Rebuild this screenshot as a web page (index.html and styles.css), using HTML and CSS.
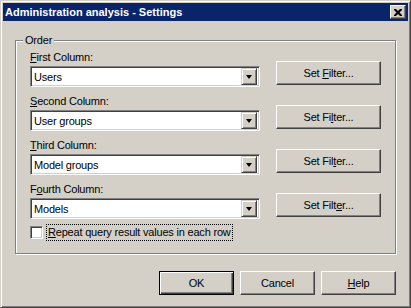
FILE: index.html
```html
<!DOCTYPE html>
<html lang="en">
  <head>
    <meta charset="UTF-8" />
    <title>Administration analysis - Settings</title>
    <link rel="stylesheet" href="styles.css">
  </head>
  <body>
    <div class="window">
      <!-- title bar -->
      <div class="titlebar">
        <span class="title">Administration analysis - Settings</span>
        <button class="close-btn" aria-label="Close">
          <svg width="8" height="7" viewBox="0 0 8 7">
            <path d="M0 0h2l2 2 2-2h2v1l-2.5 2.5 2.5 2.5v1h-2l-2-2-2 2h-2v-1l2.5-2.5-2.5-2.5z" fill="#000"/>
          </svg>
        </button>
      </div>

      <div class="body">
        <div class="group">
          <span class="group-title">Order</span>

          <div class="row">
            <div class="field">
              <label><u>F</u>irst Column:</label>
              <div class="combo">
                <span class="combo-value">Users</span>
                <span class="combo-arrow"><i></i></span>
              </div>
            </div>
            <button class="btn filter">Set <u>F</u>ilter...</button>
          </div>

          <div class="row">
            <div class="field">
              <label><u>S</u>econd Column:</label>
              <div class="combo">
                <span class="combo-value">User groups</span>
                <span class="combo-arrow"><i></i></span>
              </div>
            </div>
            <button class="btn filter">Set Fi<u>l</u>ter...</button>
          </div>

          <div class="row">
            <div class="field">
              <label><u>T</u>hird Column:</label>
              <div class="combo">
                <span class="combo-value">Model groups</span>
                <span class="combo-arrow"><i></i></span>
              </div>
            </div>
            <button class="btn filter">Set Fil<u>t</u>er...</button>
          </div>

          <div class="row">
            <div class="field">
              <label>F<u>o</u>urth Column:</label>
              <div class="combo">
                <span class="combo-value">Models</span>
                <span class="combo-arrow"><i></i></span>
              </div>
            </div>
            <button class="btn filter">Set Filt<u>e</u>r...</button>
          </div>

          <div class="check-row">
            <span class="checkbox"></span>
            <span class="check-label"><u>R</u>epeat query result values in each row</span>
          </div>
        </div>

        <div class="footer">
          <button class="btn default">OK</button>
          <button class="btn">Cancel</button>
          <button class="btn"><u>H</u>elp</button>
        </div>
      </div>
    </div>
  </body>
</html>
```

FILE: styles.css
```css
* {
  box-sizing: border-box;
}

body {
  margin: 0;
  background: #d4d0c8;
  font-family: "Liberation Sans", Arial, sans-serif;
  font-size: 11px;
  letter-spacing: -0.2px;
  color: #000;
}

u {
  text-decoration: underline;
  text-underline-offset: 1px;
}

/* window frame */
.window {
  width: 411px;
  height: 308px;
  background: #d4d0c8;
  border: 1px solid;
  border-color: #d4d0c8 #404040 #404040 #d4d0c8;
  box-shadow: inset 1px 1px 0 #fff, inset -1px -1px 0 #808080;
  padding: 2px;
}

.titlebar {
  height: 18px;
  background: #0a246a;
  display: flex;
  align-items: center;
  justify-content: space-between;
  padding: 0 2px 0 2px;
}

.title {
  color: #fff;
  font-weight: bold;
  font-size: 11px;
  letter-spacing: 0;
}

.close-btn {
  width: 16px;
  height: 14px;
  padding: 0;
  background: #d4d0c8;
  border: 1px solid;
  border-color: #fff #404040 #404040 #fff;
  box-shadow: inset -1px -1px 0 #808080;
  display: flex;
  align-items: center;
  justify-content: center;
}

.body {
  padding: 19px 12px 0 12px;
}

/* group box */
.group {
  position: relative;
  height: 214px;
  border: 1px solid #808080;
  box-shadow: 1px 1px 0 #fff, inset 1px 1px 0 #fff;
  padding: 10px 12px 0 14px;
}

.group-title {
  position: absolute;
  top: -7px;
  left: 7px;
  padding: 0 2px;
  background: #d4d0c8;
  line-height: 13px;
}

.row {
  display: flex;
  align-items: flex-start;
  gap: 16px;
  height: 44px;
}

.field {
  width: 230px;
  display: flex;
  flex-direction: column;
  gap: 2px;
}

.field label {
  line-height: 13px;
}

.combo {
  height: 21px;
  background: #fff;
  border: 1px solid;
  border-color: #808080 #fff #fff #808080;
  box-shadow: inset 1px 1px 0 #404040, inset -1px -1px 0 #d4d0c8;
  display: flex;
  align-items: center;
  padding: 2px;
}

.combo-value {
  flex: 1;
  padding-left: 1px;
}

.combo-arrow {
  width: 16px;
  height: 17px;
  background: #d4d0c8;
  border: 1px solid;
  border-color: #d4d0c8 #404040 #404040 #d4d0c8;
  box-shadow: inset 1px 1px 0 #fff, inset -1px -1px 0 #808080;
  display: flex;
  align-items: center;
  justify-content: center;
}

.combo-arrow i {
  width: 0;
  height: 0;
  border-left: 3.5px solid transparent;
  border-right: 3.5px solid transparent;
  border-top: 4px solid #000;
  margin-top: 1px;
}

/* push buttons */
.btn {
  width: 75px;
  height: 24px;
  padding: 0;
  background: #d4d0c8;
  font-family: inherit;
  font-size: 11px;
  letter-spacing: inherit;
  color: #000;
  border: 1px solid;
  border-color: #fff #404040 #404040 #fff;
  box-shadow: inset -1px -1px 0 #808080;
}

.btn.filter {
  width: 105px;
  margin-top: 10px;
}

.btn.default {
  border: 1px solid #000;
  box-shadow: inset 1px 1px 0 #fff, inset -1px -1px 0 #404040, inset -2px -2px 0 #808080;
}

/* checkbox */
.check-row {
  display: flex;
  align-items: center;
  gap: 4px;
  margin-top: -2px;
}

.checkbox {
  width: 13px;
  height: 13px;
  background: #fff;
  border: 1px solid;
  border-color: #808080 #fff #fff #808080;
  box-shadow: inset 1px 1px 0 #404040, inset -1px -1px 0 #d4d0c8;
}

.check-label {
  outline: 1px dotted #000;
  padding: 1px 1px;
  line-height: 13px;
}

.footer {
  display: flex;
  justify-content: flex-end;
  gap: 6px;
  margin-top: 17px;
}
```
